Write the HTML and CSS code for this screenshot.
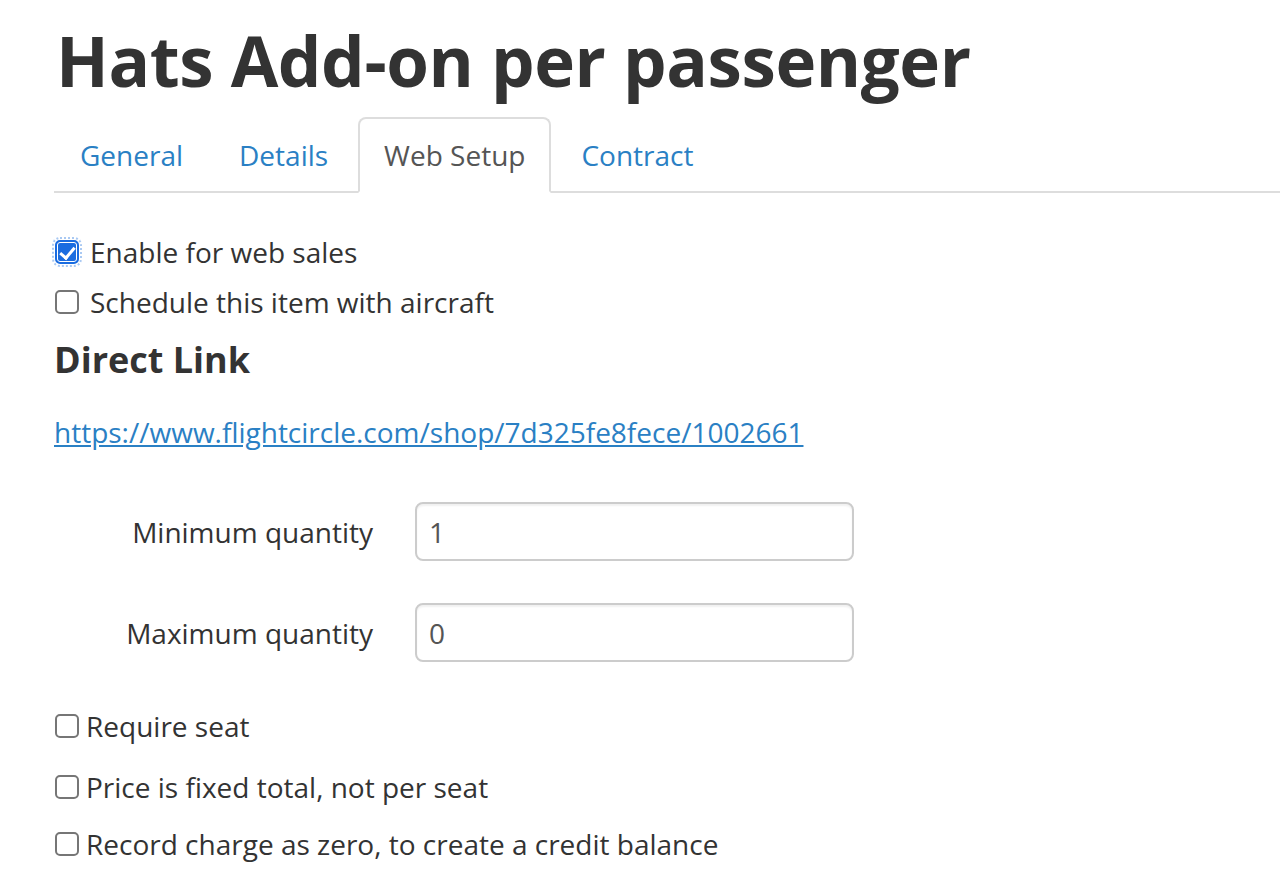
FILE: index.html
```html
<!DOCTYPE html>
<html lang="en">
<head>
<meta charset="utf-8">
<title>Hats Add-on per passenger</title>
<link rel="stylesheet" href="styles.css">
</head>
<body>
<div class="page">
  <h1 class="title">Hats Add-on per passenger</h1>
  <ul class="tabs">
    <li class="tab"><a href="#">General</a></li>
    <li class="tab"><a href="#">Details</a></li>
    <li class="tab active"><a href="#">Web Setup</a></li>
    <li class="tab"><a href="#">Contract</a></li>
  </ul>
  <div class="tab-content">
    <label class="check-row"><input type="checkbox" class="cb" checked><span>Enable for web sales</span></label>
    <label class="check-row"><input type="checkbox" class="cb"><span>Schedule this item with aircraft</span></label>
    <h4 class="section-title">Direct Link</h4>
    <p class="link-line"><a href="#">https://www.flightcircle.com/shop/7d325fe8fece/1002661</a></p>
    <div class="form-row first">
      <label class="form-label">Minimum quantity</label>
      <input class="form-input" type="text" value="1">
    </div>
    <div class="form-row">
      <label class="form-label">Maximum quantity</label>
      <input class="form-input" type="text" value="0">
    </div>
    <div class="opts">
      <label class="check-row tight"><input type="checkbox" class="cb"><span>Require seat</span></label>
      <label class="check-row tight"><input type="checkbox" class="cb"><span>Price is fixed total, not per seat</span></label>
      <label class="check-row tight"><input type="checkbox" class="cb"><span>Record charge as zero, to create a credit balance</span></label>
    </div>
  </div>
</div>
</body>
</html>
```

FILE: styles.css
```css
* { box-sizing: border-box; }
html, body { margin: 0; padding: 0; background: #fff; }
body {
  font-family: "Open Sans", "Liberation Sans", sans-serif;
  font-size: 28px;
  line-height: 40px;
  color: #333;
}
.page { padding-left: 54px; overflow: hidden; }
.title {
  margin: 21px 0 0 2px;
  font-size: 69px;
  line-height: 78px;
  font-weight: 700;
  color: #333;
  letter-spacing: -0.4px;
}
.tabs {
  list-style: none;
  margin: 18px 0 0 0;
  padding: 0;
  display: flex;
  border-bottom: 2px solid #ddd;
}
.tab { margin: 0 4px -2px 0; }
.tab a {
  display: block;
  padding: 16px 24px;
  border: 2px solid transparent;
  border-radius: 8px 8px 0 0;
  color: #2a80c4;
  text-decoration: none;
  line-height: 40px;
}
.tab.active a {
  color: #555;
  border-color: #ddd;
  border-bottom-color: #fff;
  background: #fff;
}
.tab-content { padding-top: 39px; }
.check-row {
  display: flex;
  align-items: center;
  gap: 11px;
  height: 40px;
  margin-bottom: 10px;
}
.check-row.tight { gap: 7px; margin-bottom: 19px; }
.cb {
  appearance: none;
  -webkit-appearance: none;
  margin: 0 0 0 1px;
  width: 24px;
  height: 24px;
  border: 2px solid #767676;
  border-radius: 5px;
  background: #fff;
  position: relative;
  flex: none;
}
.cb:checked {
  background: #1a6ce0;
  border-color: #1a6ce0;
  box-shadow: inset 0 0 0 1px #fff;
  outline: 2px dotted #a9c9f3;
  outline-offset: 1px;
}
.cb:checked::after {
  content: "";
  position: absolute;
  left: 6px;
  top: 2px;
  width: 6px;
  height: 12px;
  border: solid #fff;
  border-width: 0 3px 3px 0;
  transform: rotate(40deg);
}
.section-title {
  margin: 19px 0 0 0;
  font-size: 36px;
  line-height: 38px;
  font-weight: 700;
  color: #333;
}
.link-line { margin: 33px 0 0 0; }
.link-line a { color: #2a80c4; text-decoration: underline; }
.form-row {
  display: flex;
  align-items: center;
  gap: 42px;
  margin-top: 42px;
}
.form-row.first { margin-top: 50px; }
.form-label {
  width: 319px;
  text-align: right;
}
.form-input {
  width: 439px;
  height: 59px;
  border: 2px solid #ccc;
  border-radius: 8px;
  padding: 0 12px;
  font-family: inherit;
  font-size: 28px;
  color: #555;
  box-shadow: inset 0 2px 2px rgba(0,0,0,0.06);
}
.opts { margin-top: 44px; }
.opts .check-row:nth-child(1) { margin-bottom: 21px; }
.opts .check-row:nth-child(2) { margin-bottom: 17px; }
```
